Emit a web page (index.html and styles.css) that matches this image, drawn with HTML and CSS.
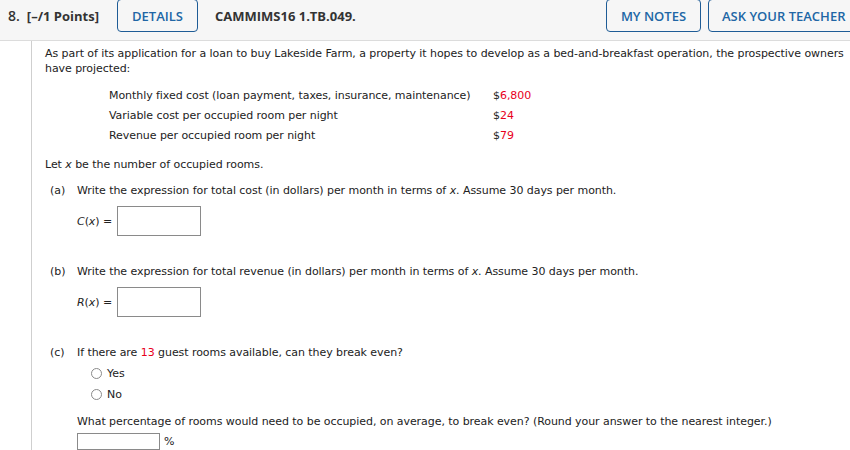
FILE: index.html
```html
<!DOCTYPE html>
<html>
<head>
<meta charset="utf-8">
<link rel="stylesheet" href="styles.css">
</head>
<body>
<div class="header">
  <span class="qnum">8.</span>
  <span class="points">[–/1 Points]</span>
  <span class="btn btn-details">DETAILS</span>
  <span class="qid">CAMMIMS16 1.TB.049.</span>
  <span class="spacer"></span>
  <span class="btn btn-notes">MY NOTES</span>
  <span class="btn btn-ask">ASK YOUR TEACHER</span>
</div>
<div class="content">
  <p class="intro">As part of its application for a loan to buy Lakeside Farm, a property it hopes to develop as a bed-and-breakfast operation, the prospective owners have projected:</p>
  <div class="table">
    <div class="trow"><span class="tlabel">Monthly fixed cost (loan payment, taxes, insurance, maintenance)</span><span class="tval">$<span class="red">6,800</span></span></div>
    <div class="trow"><span class="tlabel">Variable cost per occupied room per night</span><span class="tval">$<span class="red">24</span></span></div>
    <div class="trow"><span class="tlabel">Revenue per occupied room per night</span><span class="tval">$<span class="red">79</span></span></div>
  </div>
  <p class="letx">Let <i>x</i> be the number of occupied rooms.</p>
  <div class="part part-a">
    <div class="pline"><span class="plabel">(a)</span><span>Write the expression for total cost (in dollars) per month in terms of <i>x</i>. Assume 30 days per month.</span></div>
    <div class="ansrow"><span class="fn"><i>C</i>(<i>x</i>) =</span><span class="box"></span></div>
  </div>
  <div class="part part-b">
    <div class="pline"><span class="plabel">(b)</span><span>Write the expression for total revenue (in dollars) per month in terms of <i>x</i>. Assume 30 days per month.</span></div>
    <div class="ansrow"><span class="fn"><i>R</i>(<i>x</i>) =</span><span class="box"></span></div>
  </div>
  <div class="part part-c">
    <div class="pline"><span class="plabel">(c)</span><span>If there are <span class="red">13</span> guest rooms available, can they break even?</span></div>
    <div class="radio-row"><span class="radio"></span><span>Yes</span></div>
    <div class="radio-row"><span class="radio"></span><span>No</span></div>
    <div class="sub">What percentage of rooms would need to be occupied, on average, to break even? (Round your answer to the nearest integer.)</div>
    <div class="pct-row"><span class="smallbox"></span><span>%</span></div>
  </div>
</div>
</body>
</html>
```

FILE: styles.css
```css
html, body {
  margin: 0;
  padding: 0;
  background: #fff;
}
body {
  width: 850px;
  height: 450px;
  overflow: hidden;
  font-family: "DejaVu Sans", Verdana, sans-serif;
  font-size: 11px;
  color: #222;
}
.header {
  display: flex;
  align-items: flex-start;
  height: 40px;
  background: #f6f6f6;
  border-bottom: 1px solid #dcdcdc;
  font-family: "Open Sans", sans-serif;
  white-space: nowrap;
  overflow: hidden;
}
.qnum {
  margin-left: 8px;
  margin-top: 6px;
  font-size: 14px;
  font-weight: 600;
  color: #333;
}
.points {
  margin-left: 7px;
  margin-top: 7px;
  font-size: 13px;
  font-weight: 700;
  color: #333;
}
.btn {
  box-sizing: border-box;
  height: 33px;
  margin-top: -1px;
  border: 1px solid #1e5c96;
  border-radius: 4px;
  display: flex;
  align-items: center;
  justify-content: center;
  font-size: 13px;
  font-weight: 600;
  color: #2166a5;
  background: #f6f6f6;
  flex-shrink: 0;
}
.btn-details {
  margin-left: 18px;
  width: 81px;
}
.qid {
  margin-left: 17px;
  margin-top: 7px;
  font-size: 13px;
  font-weight: 700;
  color: #333;
}
.spacer { flex: 1; }
.btn-notes {
  width: 95px;
}
.btn-ask {
  margin-left: 7px;
  width: 150px;
  margin-right: -8px;
  justify-content: flex-start;
  padding-left: 13px;
}
.content {
  margin-left: 31px;
  border-left: 1px solid #cfcfcf;
  padding-left: 13px;
  padding-top: 5px;
  height: 420px;
  line-height: 15px;
  letter-spacing: -0.06px;
}
p { margin: 0; }
.intro {
  width: 804px;
}
.red { color: #e8001c; }
.table {
  margin-top: 9px;
  margin-left: 64px;
}
.trow {
  display: flex;
  height: 20px;
  align-items: center;
}
.tlabel {
  width: 384px;
}
.letx {
  margin-top: 12px;
}
.part-a { margin-top: 11px; }
.part-b { margin-top: 28px; }
.part-c { margin-top: 28px; }
.pline {
  display: flex;
  margin-left: 5px;
}
.plabel {
  width: 27px;
}
.ansrow {
  display: flex;
  align-items: center;
  margin-left: 32px;
  margin-top: 8px;
}
.fn {
  width: 40px;
}
.box {
  box-sizing: border-box;
  width: 84px;
  height: 30px;
  border: 1px solid #8a8a8a;
  background: #fff;
}
.radio-row {
  display: flex;
  align-items: center;
  margin-left: 46px;
  margin-top: 6px;
  height: 15px;
}
.radio {
  box-sizing: border-box;
  width: 11px;
  height: 11px;
  border: 1px solid #8a8a8a;
  border-radius: 50%;
  margin-right: 5px;
  background: #fff;
}
.sub {
  margin-left: 32px;
  margin-top: 12px;
}
.pct-row {
  display: flex;
  align-items: center;
  margin-left: 32px;
  margin-top: 4px;
}
.smallbox {
  box-sizing: border-box;
  width: 83px;
  height: 17px;
  border: 1px solid #8a8a8a;
  margin-right: 4px;
}
```
